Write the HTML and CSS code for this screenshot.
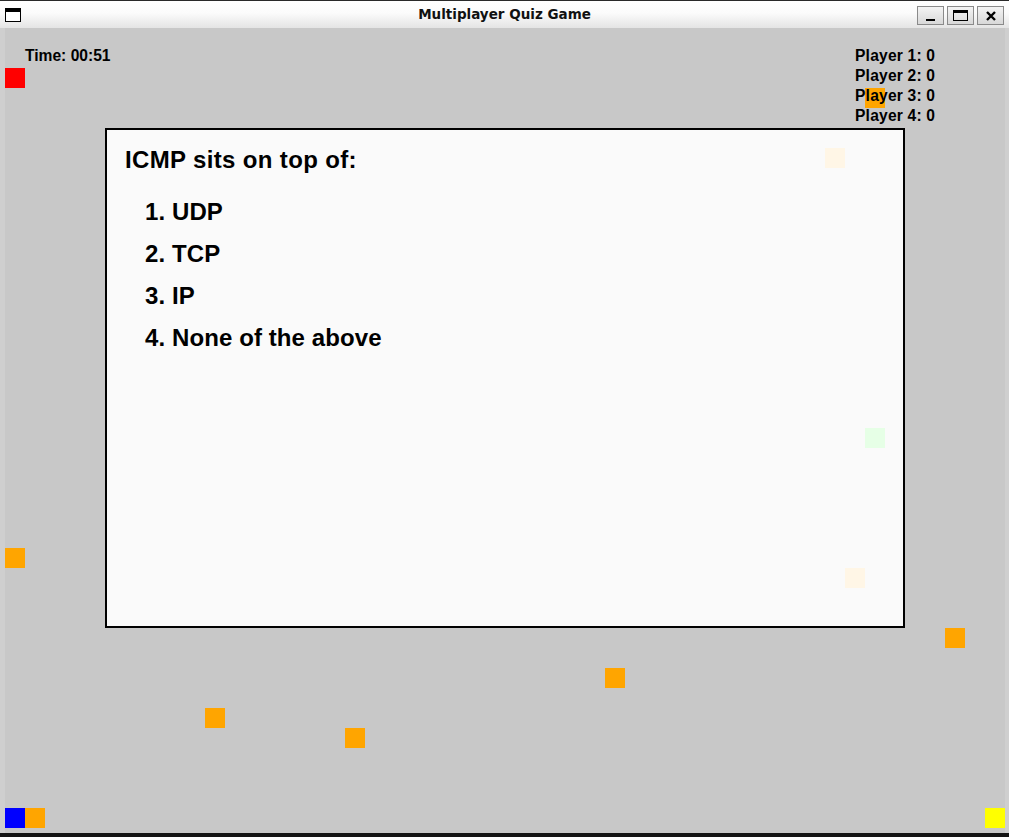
FILE: index.html
```html
<!DOCTYPE html>
<html>
<head>
<meta charset="utf-8">
<title>Multiplayer Quiz Game</title>
<link rel="stylesheet" href="styles.css">
</head>
<body>
<div class="window">
  <div class="titlebar">
    <div class="app-icon"></div>
    <div class="title">Multiplayer Quiz Game</div>
    <div class="buttons">
      <div class="wbtn"><span class="min-glyph"></span></div>
      <div class="wbtn"><span class="max-glyph"></span></div>
      <div class="wbtn"><svg width="12" height="12" viewBox="0 0 12 12"><path d="M2 2 L10 10 M10 2 L2 10" stroke="#000" stroke-width="2.4"/></svg></div>
    </div>
  </div>
  <div class="frame">
    <div class="canvas">
      <div class="sq red" style="left:0px;top:40px"></div>
      <div class="sq orange" style="left:860px;top:60px"></div>
      <div class="sq orange" style="left:820px;top:120px"></div>
      <div class="sq green" style="left:860px;top:400px"></div>
      <div class="sq orange" style="left:840px;top:540px"></div>
      <div class="sq orange" style="left:0px;top:520px"></div>
      <div class="sq orange" style="left:940px;top:600px"></div>
      <div class="sq orange" style="left:600px;top:640px"></div>
      <div class="sq orange" style="left:200px;top:680px"></div>
      <div class="sq orange" style="left:340px;top:700px"></div>
      <div class="sq blue" style="left:0px;top:780px"></div>
      <div class="sq orange" style="left:20px;top:780px"></div>
      <div class="sq yellow" style="left:980px;top:780px"></div>

      <div class="hud">
        <div class="timer">Time: 00:51</div>
        <div class="scores">
          <div>Player 1: 0</div>
          <div>Player 2: 0</div>
          <div>Player 3: 0</div>
          <div>Player 4: 0</div>
        </div>
      </div>
      <div class="panel">
        <div class="question">ICMP sits on top of:</div>
        <ol class="options">
          <li>1. UDP</li>
          <li>2. TCP</li>
          <li>3. IP</li>
          <li>4. None of the above</li>
        </ol>
      </div>
    </div>
  </div>
</div>
</body>
</html>
```

FILE: styles.css
```css
* { box-sizing: border-box; }
html, body { margin: 0; padding: 0; }
body { width: 1009px; height: 837px; overflow: hidden; background: #c8c8c8; }

.window { width: 1009px; height: 837px; display: flex; flex-direction: column; }

.titlebar {
  height: 28px;
  flex: none;
  position: relative;
  display: flex;
  align-items: center;
  border-top: 1px solid #2a2a2a;
  background: linear-gradient(#ffffff 0%, #fbfbfb 45%, #e4e4e4 100%);
}
.app-icon {
  position: absolute;
  left: 5px; top: 7px;
  width: 16px; height: 14px;
  background: #fff;
  border: 1.5px solid #000;
  border-top: 4px solid #000;
}
.title {
  flex: 1;
  text-align: center;
  font-family: "DejaVu Sans", sans-serif;
  font-weight: bold;
  font-size: 13.5px;
  color: #111;
  padding-bottom: 1px;
}
.buttons {
  position: absolute;
  right: 5px; top: 5px;
  display: flex;
  gap: 3px;
}
.wbtn {
  width: 27px; height: 19px;
  border: 1px solid #8a8a8a;
  background: linear-gradient(#f4f4f4, #d8d8d8);
  display: flex;
  align-items: center;
  justify-content: center;
}
.min-glyph { width: 9px; height: 2px; background: #000; margin-top: 8px; }
.max-glyph { width: 15px; height: 11px; border: 1.5px solid #000; border-top: 3px solid #000; }

.frame {
  flex: 1;
  display: flex;
  background: #cfcfcf;
  padding: 0 4px 4px 5px;
  position: relative;
}
.frame::after {
  content: "";
  position: absolute;
  left: 0; right: 0; bottom: 0;
  height: 4px;
  background: #141414;
}
.canvas {
  position: relative;
  width: 1000px;
  height: 805px;
  background: #c8c8c8;
  font-family: "Liberation Sans", Arial, sans-serif;
  font-weight: bold;
  color: #000;
}
.sq { position: absolute; width: 20px; height: 20px; z-index: 0; }
.red { background: #ff0000; }
.orange { background: #ffa500; }
.blue { background: #0000ff; }
.yellow { background: #ffff00; }
.green { background: #00ff00; }

.hud {
  position: relative;
  z-index: 2;
  height: 100px;
  display: flex;
  padding: 18px 0 0 20px;
  font-size: 15.6px;
  line-height: 20px;
}
.timer { width: 830px; }
.scores { letter-spacing: 0.2px; }

.panel {
  position: relative;
  z-index: 1;
  margin-left: 100px;
  width: 800px;
  height: 500px;
  border: 2px solid #000;
  background: rgba(255, 255, 255, 0.9);
  padding: 9px 0 0 18px;
  font-size: 24px;
  line-height: 42px;
}
.question { letter-spacing: 0.35px; }
.options {
  list-style: none;
  margin: 10px 0 0 20px;
  padding: 0;
  letter-spacing: 0.1px;
}
```
